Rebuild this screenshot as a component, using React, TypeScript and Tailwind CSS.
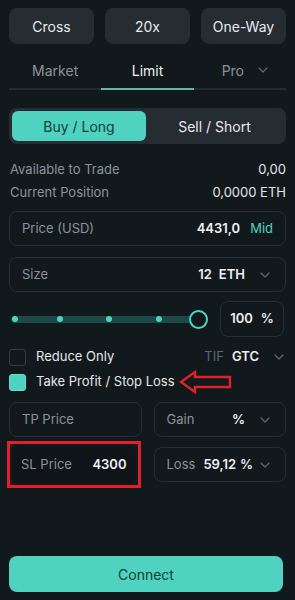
import React from "react";

const Chevron = ({ className = "" }: { className?: string }) => (
  <svg width="10" height="6" viewBox="0 0 10 6" className={className} fill="none">
    <path d="M1 1l4 4 4-4" stroke="#5d666d" strokeWidth="1.2" strokeLinecap="round" strokeLinejoin="round" />
  </svg>
);

export default function App() {
  return (
    <div className="w-[295px] h-[600px] bg-[#12191d] text-[#e4e7ea] px-[9px] pt-[8px] relative" style={{ fontFamily: "Inter, 'Liberation Sans', sans-serif" }}>
      <div className="grid grid-cols-3 gap-[11px]">
        {["Cross", "20x", "One-Way"].map((t) => (
          <div key={t} className="h-[36px] rounded-[8px] bg-[#252c32] flex items-center justify-center text-[14px] text-[#e8eaec]">
            {t}
          </div>
        ))}
      </div>

      <div className="grid grid-cols-3 border-b-2 border-[#232a30] h-[46px] pt-[8px]">
        <div className="flex items-center justify-center text-[14px] text-[#8b9398]">Market</div>
        <div className="flex items-center justify-center text-[14px] text-[#eef0f1] relative">
          Limit
          <div className="absolute left-0 right-0 bottom-[-2px] h-[2px] bg-[#63b6ab]" />
        </div>
        <div className="flex items-center justify-center text-[14px] text-[#8b9398] gap-[14px] pl-[10px]">
          Pro <Chevron />
        </div>
      </div>

      <div className="mt-[18px] h-[36px] rounded-[8px] bg-[#252c32] p-[3px] flex">
        <div className="w-[134px] rounded-[6px] bg-[#50d2c1] flex items-center justify-center text-[14px] text-[#0f3d38]">Buy / Long</div>
        <div className="flex-1 flex items-center justify-center text-[14px] text-[#e8eaec]">Sell / Short</div>
      </div>

      <div className="mt-[16px] flex justify-between items-center h-[20px] text-[13px]">
        <span className="text-[#8b9398] pl-[1px]">Available to Trade</span>
        <span className="text-[#e4e7ea]">0,00</span>
      </div>
      <div className="mt-[3px] flex justify-between items-center h-[20px] text-[13px]">
        <span className="text-[#8b9398] pl-[1px]">Current Position</span>
        <span className="text-[#e4e7ea]">0,0000 ETH</span>
      </div>

      <div className="mt-[8px] h-[35px] rounded-[8px] border border-[#262d33] flex items-center px-[12px] text-[13px]">
        <span className="text-[#8b9398]">Price (USD)</span>
        <span className="ml-auto font-semibold text-[#eef0f1]">4431,0</span>
        <span className="ml-[10px] text-[#50d2c1]">Mid</span>
      </div>

      <div className="mt-[11px] h-[35px] rounded-[8px] border border-[#262d33] flex items-center px-[12px] text-[13px]">
        <span className="text-[#8b9398]">Size</span>
        <span className="ml-auto font-semibold text-[#eef0f1]">12</span>
        <span className="ml-[7px] font-semibold text-[#eef0f1]">ETH</span>
        <Chevron className="ml-[15px] mr-[3px]" />
      </div>

      <div className="mt-[9px] flex items-center h-[36px]">
        <div className="relative w-[200px] h-[20px] flex items-center">
          <div className="absolute left-[2px] right-[8px] h-[7px] rounded-full bg-[#1b4944]" />
          {[4, 49, 98, 148].map((x) => (
            <div key={x} className="absolute w-[6px] h-[6px] rounded-full bg-[#50d2c1]" style={{ left: x - 3 + 2 }} />
          ))}
          <div className="absolute left-[180px] w-[19px] h-[19px] rounded-full border-2 border-[#50d2c1] bg-[#12191d]" />
        </div>
        <div className="ml-auto mr-[2px] w-[64px] h-[36px] rounded-[8px] border border-[#262d33] flex items-center justify-center text-[13px] font-semibold text-[#eef0f1]">
          100<span className="ml-[8px]">%</span>
        </div>
      </div>

      <div className="mt-[11px] flex items-center h-[18px] text-[13px]">
        <div className="w-[17px] h-[17px] rounded-[3px] border border-[#353d43]" />
        <span className="ml-[10px] text-[#e4e7ea]">Reduce Only</span>
        <span className="ml-auto text-[#5d666d]">TIF</span>
        <span className="ml-[8px] font-semibold text-[#eef0f1]">GTC</span>
        <Chevron className="ml-[15px] mr-[2px]" />
      </div>

      <div className="mt-[7px] flex items-center h-[18px] text-[13px] relative">
        <div className="w-[17px] h-[17px] rounded-[3px] border border-[#6fd9cb] bg-[#50d2c1]" />
        <span className="ml-[10px] text-[#e4e7ea]">Take Profit / Stop Loss</span>
        <svg width="54" height="24" viewBox="0 0 54 24" className="ml-[4px]" fill="none">
          <path d="M2 12 L16 2 L16 7 L51 7 L51 17 L16 17 L16 22 Z" stroke="#e0202a" strokeWidth="2.4" strokeLinejoin="miter" />
        </svg>
      </div>

      <div className="mt-[11px] grid grid-cols-2 gap-[12px]">
        <div className="h-[35px] rounded-[8px] border border-[#262d33] flex items-center px-[12px] text-[13px] text-[#8b9398]">TP Price</div>
        <div className="h-[35px] rounded-[8px] border border-[#262d33] flex items-center px-[12px] text-[13px]">
          <span className="text-[#8b9398]">Gain</span>
          <span className="ml-auto font-semibold text-[#eef0f1]">%</span>
          <Chevron className="ml-[15px] mr-[3px]" />
        </div>
      </div>

      <div className="mt-[4px] grid grid-cols-2 gap-[12px]">
        <div className="ml-[-2px] mr-[1px] h-[47px] border-[3px] border-[#e0202a] p-[2px]">
          <div className="h-full rounded-[6px] bg-[#0e1418] flex items-center px-[9px] text-[13px]">
            <span className="text-[#8b9398]">SL Price</span>
            <span className="ml-auto font-semibold text-[#eef0f1]">4300</span>
          </div>
        </div>
        <div className="mt-[6px] h-[35px] rounded-[8px] border border-[#262d33] flex items-center px-[12px] text-[13px]">
          <span className="text-[#8b9398]">Loss</span>
          <span className="ml-[8px] font-semibold text-[#eef0f1]">59,12</span>
          <span className="ml-[4px] font-semibold text-[#eef0f1]">%</span>
          <Chevron className="ml-auto mr-[3px]" />
        </div>
      </div>

      <div className="absolute left-[9px] right-[12px] top-[556px] h-[36px] rounded-[8px] bg-[#50d2c1] flex items-center justify-center text-[14px] text-[#0f3d38]">
        Connect
      </div>
    </div>
  );
}
